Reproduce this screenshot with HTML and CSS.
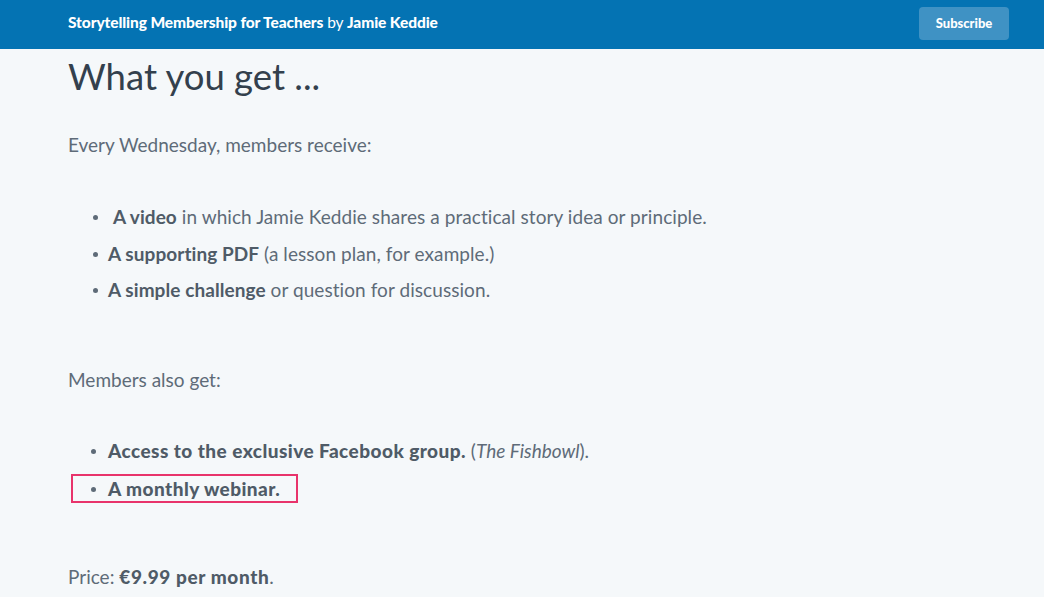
FILE: index.html
```html
<!DOCTYPE html>
<html lang="en">
<head>
<meta charset="utf-8">
<title>Storytelling Membership for Teachers</title>
<link rel="stylesheet" href="styles.css">
</head>
<body>
<header class="topbar">
  <div class="brand"><strong>Storytelling Membership for Teachers</strong> by <strong>Jamie Keddie</strong></div>
  <a class="subscribe" href="#">Subscribe</a>
</header>
<main class="content">
  <h1 class="title">What you get ...</h1>
  <p class="para first">Every Wednesday, members receive:</p>
  <ul class="list narrow">
    <li>&nbsp;<strong>A video</strong> in which Jamie Keddie shares a practical story idea or principle.</li>
    <li><strong>A supporting PDF</strong> (a lesson plan, for example.)</li>
    <li><strong>A simple challenge</strong> or question for discussion.</li>
  </ul>
  <p class="para also">Members also get:</p>
  <ul class="list wide">
    <li><strong>Access to the exclusive Facebook group.</strong> (<em>The Fishbowl</em>).</li>
    <li class="highlight"><strong>A monthly webinar.</strong></li>
  </ul>
  <p class="para price">Price: <strong>€9.99 per month</strong>.</p>
</main>
</body>
</html>
```

FILE: styles.css
```css
html, body {
  margin: 0;
  padding: 0;
}
body {
  background: #f5f8fa;
  font-family: Lato, "Open Sans", sans-serif;
  color: #5e6b78;
  height: 597px;
  overflow: hidden;
}
.topbar {
  height: 49px;
  background: #0473b3;
  display: flex;
  align-items: center;
  justify-content: space-between;
  padding: 0 35px 0 68px;
  box-sizing: border-box;
  color: #fff;
}
.brand {
  font-size: 15.5px;
  font-weight: 400;
  margin-top: -6px;
  letter-spacing: -0.1px;
}
.brand strong {
  font-weight: 900;
}
.subscribe {
  display: flex;
  align-items: center;
  justify-content: center;
  width: 90px;
  height: 33px;
  margin-top: -3px;
  background: #3f92c4;
  border-radius: 4px;
  color: #fff;
  font-size: 13px;
  font-weight: 900;
  text-decoration: none;
}
.content {
  padding: 0 0 0 68px;
}
.title {
  margin: 0;
  padding-top: 6px;
  font-size: 36.5px;
  font-weight: 400;
  color: #33404d;
  line-height: 42px;
}
.para {
  margin: 0;
  font-size: 19px;
  line-height: 24px;
}
.para.first {
  margin-top: 36px;
}
.list {
  margin: 0;
  padding: 0 0 0 40px;
}
.list li {
  position: relative;
  list-style: none;
}
.list li::before {
  content: "";
  position: absolute;
  left: -15px;
  top: 50%;
  width: 5px;
  height: 5px;
  margin-top: -2px;
  border-radius: 50%;
  background: #5e6b78;
}
.list strong {
  color: #4f5b67;
  font-weight: 700;
}
.narrow {
  margin-top: 42px;
  font-size: 19px;
  letter-spacing: 0.07px;
}
.narrow li {
  line-height: 36.5px;
}
.also {
  margin-top: 59px;
}
.wide {
  margin-top: 40px;
  font-size: 19px;
}
.wide li {
  line-height: 38px;
}
.wide li::before {
  left: -17px;
}
.wide strong {
  font-weight: 900;
  letter-spacing: 0.45px;
}
.highlight {
  width: max-content;
}
.highlight::after {
  content: "";
  position: absolute;
  left: -37px;
  right: -18px;
  top: 4px;
  bottom: 5px;
  border: 2px solid #e8336b;
}
.price {
  margin-top: 57px;
}
.price strong {
  color: #4f5b67;
  font-weight: 900;
  letter-spacing: 0.6px;
}
```
